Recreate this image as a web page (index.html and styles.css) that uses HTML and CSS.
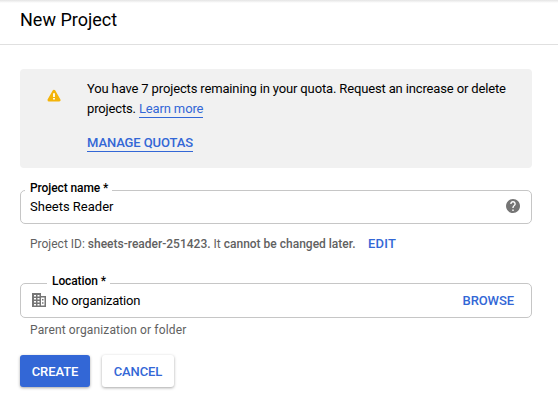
FILE: index.html
```html
<!DOCTYPE html>
<html lang="en">
<head>
<meta charset="utf-8">
<title>New Project</title>
<link rel="stylesheet" href="styles.css">
</head>
<body>
<header class="header"><h1 class="title">New Project</h1></header>
<main class="content">
  <section class="notice">
    <svg class="warning-icon" viewBox="0 0 14 13" aria-hidden="true">
      <path fill="#f4b40a" stroke="#f4b40a" stroke-width="3" stroke-linejoin="round" d="M7 2.2 12 11H2z"/>
      <path fill="#fff" d="M6.1 4.2h1.8v3.7H6.1zM6.1 9h1.8v1.6H6.1z"/>
    </svg>
    <div class="notice-body">
      <p class="notice-text">You have 7 projects remaining in your quota. Request an increase or delete projects. <a class="link" href="#">Learn more</a></p>
      <a class="link manage" href="#">MANAGE QUOTAS</a>
    </div>
  </section>
  <div class="field">
    <label class="label">Project name *</label>
    <span class="value">Sheets Reader</span>
    <svg class="help-icon" viewBox="2 2 20 20" aria-hidden="true"><path fill="#757575" d="M12 2C6.48 2 2 6.48 2 12s4.480 10 10 10 10-4.480 10-10S17.520 2 12 2zm1 17h-2v-2h2v2zm2.070-7.750-.9.920C13.450 12.900 13 13.500 13 15h-2v-.5c0-1.100.450-2.100 1.170-2.830l1.240-1.260c.370-.360.590-.860.590-1.410 0-1.100-.9-2-2-2s-2 .9-2 2H8c0-2.210 1.790-4 4-4s4 1.790 4 4c0 .880-.360 1.680-.930 2.250z"/></svg>
  </div>
  <p class="hint project-id">Project ID: <b>sheets-reader-251423.</b> It <b>cannot be changed later.</b><a class="edit" href="#">EDIT</a></p>
  <div class="field location">
    <label class="label">Location *</label>
    <svg class="org-icon" viewBox="0 0 14 14" aria-hidden="true"><path fill="#757575" fill-rule="evenodd" d="M0 0h9v3h5v11H0zM2 2v1.500h2V2zM5.500 2v1.500h2V2zM2 5v1.500h2V5zM5.500 5v1.500h2V5zM2 8v1.500h2V8zM5.500 8v1.500h2V8zM2 11v1.500h2V11zM5.500 11v1.500h2V11zM9 4.500v8h3.500v-8z"/><path fill="#757575" d="M10 6h1.500v1.500H10zM10 9.200h1.500v1.500H10z"/></svg>
    <span class="value organization">No organization</span>
    <a class="browse" href="#">BROWSE</a>
  </div>
  <p class="hint parent">Parent organization or folder</p>
  <div class="actions">
    <button class="button primary">CREATE</button>
    <button class="button">CANCEL</button>
  </div>
</main>
</body>
</html>
```
FILE: styles.css
```css
* { box-sizing: border-box; }
body { min-height: 404px; margin: 0; background: #fff; color: #000; font: 13px/20px Roboto, sans-serif; }
a { color: #3367d6; text-decoration: none; }
p, h1 { margin: 0; }
b { font-weight: 500; }
.header { height: 45px; padding: 8px 20px 0; border-bottom: 1px solid #e0e0e0; background: linear-gradient(#e4e4e4, #fff 3px); }
.title { font-size: 18px; line-height: 24px; font-weight: 400; }
.content { padding: 24px 26px 0 20px; }
.notice { display: flex; height: 99px; padding: 10px 20px 0 27px; border-radius: 4px; background: #f1f1f1; }
.warning-icon { flex: none; width: 14px; height: 13px; margin: 10px 26px 0 0; }
.notice-body { flex: 1; }
.notice-text { letter-spacing: -.145px; }
.link { display: inline-block; line-height: 16px; border-bottom: 1px solid #3367d6; }
.manage { margin-top: 16px; font-weight: 500; letter-spacing: -.1px; }
.field { position: relative; display: flex; align-items: center; height: 34px; margin-top: 22px; padding: 0 11px 0 9px; border: 1px solid #c6c6c6; border-radius: 5px; }
.label { position: absolute; top: -11px; left: 4px; padding: 0 4px 0 5px; background: #fff; font-size: 12px; line-height: 16px; font-weight: 500; letter-spacing: -.1px; }
.value { flex: 1; }
.organization { letter-spacing: -.25px; }
.help-icon { width: 14px; height: 14px; margin-top: -2px; }
.hint { padding-left: 10px; color: #616161; font-size: 12px; line-height: 16px; }
.project-id { margin-top: 12px; }
.edit { margin-left: 12.5px; font-size: 13px; font-weight: 500; letter-spacing: .2px; }
.location { height: 35px; margin-top: 31px; padding-right: 17px; padding-left: 11px; }
.location .label { left: 26px; }
.org-icon { width: 14px; height: 14px; margin: -1px 6px 0 0; }
.browse { font-weight: 500; letter-spacing: -.1px; }
.parent { margin-top: 4px; letter-spacing: .14px; }
.actions { display: flex; gap: 12px; margin-top: 17px; }
.button { width: 72px; height: 32px; padding: 1px 0 0; border: 0; border-radius: 3px; background: #fff; color: #3367d6; font: 500 13px/31px Roboto, sans-serif; letter-spacing: -.1px; box-shadow: 0 1px 3px rgba(0, 0, 0, .35); }
.primary { width: 70px; background: #3367d6; color: #fff; }
```
